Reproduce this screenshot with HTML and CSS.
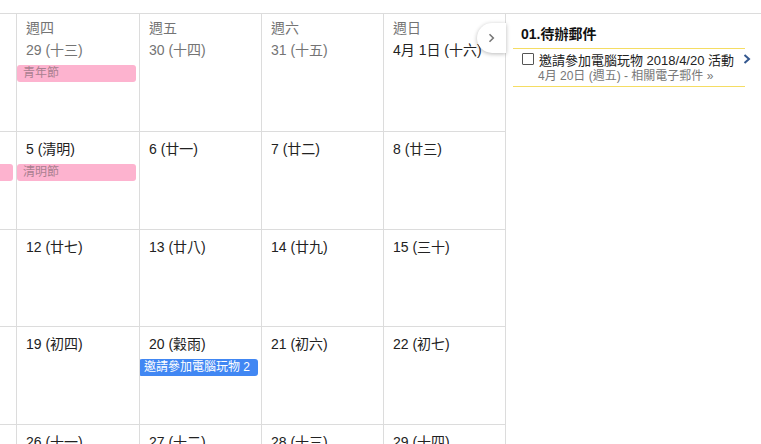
FILE: index.html
```html
<!DOCTYPE html>
<html lang="zh-Hant">
<head>
<meta charset="utf-8">
<title>日曆</title>
<link rel="stylesheet" href="styles.css">
</head>
<body>
<div class="app">
  <div class="cal">
    <!-- row 1 -->
    <div class="cell edge"></div>
    <div class="cell"><div class="wd">週四</div><div class="dt past">29 (十三)</div><div class="pill pink">青年節</div></div>
    <div class="cell"><div class="wd">週五</div><div class="dt past">30 (十四)</div></div>
    <div class="cell"><div class="wd">週六</div><div class="dt past">31 (十五)</div></div>
    <div class="cell"><div class="wd">週日</div><div class="dt">4月 1日 (十六)</div></div>
    <!-- row 2 -->
    <div class="cell edge"><div class="spacer"></div><div class="pill pink edgepill"></div></div>
    <div class="cell"><div class="dt">5 (清明)</div><div class="pill pink">清明節</div></div>
    <div class="cell"><div class="dt">6 (廿一)</div></div>
    <div class="cell"><div class="dt">7 (廿二)</div></div>
    <div class="cell"><div class="dt">8 (廿三)</div></div>
    <!-- row 3 -->
    <div class="cell edge"></div>
    <div class="cell"><div class="dt">12 (廿七)</div></div>
    <div class="cell"><div class="dt">13 (廿八)</div></div>
    <div class="cell"><div class="dt">14 (廿九)</div></div>
    <div class="cell"><div class="dt">15 (三十)</div></div>
    <!-- row 4 -->
    <div class="cell edge"></div>
    <div class="cell"><div class="dt">19 (初四)</div></div>
    <div class="cell"><div class="dt">20 (穀雨)</div><div class="pill blue">邀請參加電腦玩物 2</div></div>
    <div class="cell"><div class="dt">21 (初六)</div></div>
    <div class="cell"><div class="dt">22 (初七)</div></div>
    <!-- row 5 -->
    <div class="cell edge"></div>
    <div class="cell"><div class="dt">26 (十一)</div></div>
    <div class="cell"><div class="dt">27 (十二)</div></div>
    <div class="cell"><div class="dt">28 (十三)</div></div>
    <div class="cell"><div class="dt">29 (十四)</div></div>
  </div>
  <aside class="panel">
    <div class="ptitle">01.待辦郵件</div>
    <div class="item">
      <div class="line1">
        <span class="cb"></span>
        <span class="itxt">邀請參加電腦玩物 2018/4/20 活動</span>
        <svg class="go" width="8" height="10" viewBox="0 0 8 10"><path d="M1.5 1 L6 5 L1.5 9" fill="none" stroke="#33578f" stroke-width="2"/></svg>
      </div>
      <div class="line2">4月 20日 (週五) - 相關電子郵件 »</div>
    </div>
  </aside>
  <div class="tab"><svg width="7" height="10" viewBox="0 0 7 10"><path d="M1.5 1.2 L5.3 5 L1.5 8.8" fill="none" stroke="#777" stroke-width="1.6"/></svg></div>
</div>
</body>
</html>
```
FILE: styles.css
```css
* { box-sizing: border-box; }
html, body { margin: 0; padding: 0; background: #fff; }
body {
  font-family: "Liberation Sans", "Noto Sans CJK TC", sans-serif;
  color: #222;
  width: 761px;
  height: 444px;
  overflow: hidden;
}
.app {
  position: relative;
  margin-top: 13px;
  border-top: 1px solid #dcdcdc;
  display: flex;
}
.cal {
  display: grid;
  grid-template-columns: 16px 123px 122px 122px 122px;
  grid-template-rows: 118px 98px 97px 98px 98px;
  width: 505px;
  flex: none;
}
.cell {
  border-bottom: 1px solid #dcdcdc;
  border-left: 1px solid #dcdcdc;
  padding: 7px 3px 0 0;
  overflow: hidden;
  white-space: nowrap;
}
.cell.edge { border-left: none; }
.wd {
  font-size: 14px;
  line-height: 15px;
  color: #747474;
  padding-left: 9px;
  margin-bottom: 4px;
}
.dt {
  font-size: 14px;
  line-height: 20px;
  padding-left: 9px;
  color: #222;
}
.dt.past { color: #747474; }
.spacer { height: 20px; }
.pill {
  margin-top: 5px;
  height: 17px;
  line-height: 17px;
  font-size: 12px;
  padding-left: 6px;
  border-radius: 3px;
  overflow: hidden;
}
.pill.pink { background: #fdb3cf; color: #a98090; }
.pill.blue { background: #4187f3; color: #fff; margin-left: -1px; padding-left: 5px; }
.pill.edgepill { border-radius: 0 3px 3px 0; }
.panel {
  width: 256px;
  border-left: 1px solid #dcdcdc;
  height: 431px;
}
.ptitle {
  font-size: 14px;
  font-weight: bold;
  line-height: 20px;
  padding: 10px 0 0 15px;
  margin-bottom: 4px;
  color: #111;
}
.item {
  margin-left: 7px;
  width: 232px;
  border-top: 1px solid #f5dd63;
  border-bottom: 1px solid #f5dd63;
  padding: 1px 0 3px 0;
}
.line1 {
  display: flex;
  align-items: center;
  height: 18px;
  padding-left: 9px;
  margin-right: -6px;
}
.cb {
  width: 12px;
  height: 12px;
  border: 1px solid #555;
  border-radius: 1px;
  flex: none;
  margin-right: 5px;
}
.itxt {
  font-size: 13px;
  color: #222;
  white-space: nowrap;
}
.go { margin-left: auto; flex: none; }
.line2 {
  margin-top: 1px;
  font-size: 12px;
  line-height: 14px;
  color: #777;
  padding-left: 25px;
  white-space: nowrap;
}
.tab {
  position: absolute;
  left: 477px;
  top: 9px;
  width: 29px;
  height: 30px;
  background: #fff;
  border-radius: 15px 0 0 15px;
  box-shadow: 0 1px 4px rgba(0,0,0,0.28);
  display: flex;
  align-items: center;
  justify-content: center;
}
```
